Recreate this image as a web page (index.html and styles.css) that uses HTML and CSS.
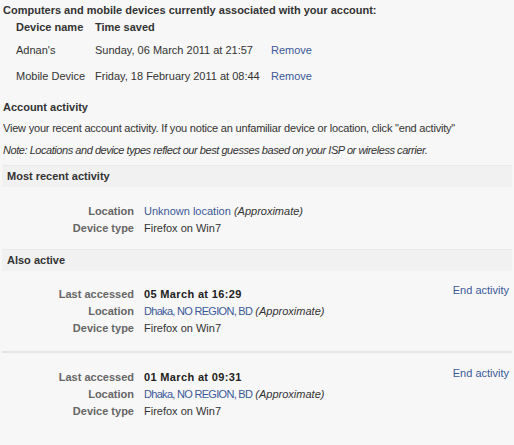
FILE: index.html
```html
<!DOCTYPE html>
<html>
<head>
<meta charset="utf-8">
<link rel="stylesheet" href="styles.css">
</head>
<body>
<div class="page">
  <h2 class="title">Computers and mobile devices currently associated with your account:</h2>
  <div class="devices">
    <div class="dev-head">Device name</div><div class="dev-head">Time saved</div><div></div>
    <div class="dev-cell">Adnan's</div><div class="dev-cell">Sunday, 06 March 2011 at 21:57</div><div class="dev-cell"><a class="link" href="#">Remove</a></div>
    <div class="dev-cell">Mobile Device</div><div class="dev-cell">Friday, 18 February 2011 at 08:44</div><div class="dev-cell"><a class="link" href="#">Remove</a></div>
  </div>

  <h2 class="section-title">Account activity</h2>
  <p class="intro">View your recent account activity. If you notice an unfamiliar device or location, click "end activity"</p>
  <p class="note">Note: Locations and device types reflect our best guesses based on your ISP or wireless carrier.</p>

  <div class="bar">Most recent activity</div>
  <div class="entry recent">
    <div class="info">
      <div class="label">Location</div><div class="value"><a class="link" href="#">Unknown location</a> <i>(Approximate)</i></div>
      <div class="label">Device type</div><div class="value">Firefox on Win7</div>
    </div>
  </div>

  <div class="bar">Also active</div>
  <div class="entry">
    <div class="info">
      <div class="label">Last accessed</div><div class="value strong">05 March at 16:29</div>
      <div class="label">Location</div><div class="value"><a class="link loc" href="#">Dhaka, NO REGION, BD</a> <i>(Approximate)</i></div>
      <div class="label">Device type</div><div class="value">Firefox on Win7</div>
    </div>
    <a class="link end" href="#">End activity</a>
  </div>
  <div class="entry sep">
    <div class="info">
      <div class="label">Last accessed</div><div class="value strong">01 March at 09:31</div>
      <div class="label">Location</div><div class="value"><a class="link loc" href="#">Dhaka, NO REGION, BD</a> <i>(Approximate)</i></div>
      <div class="label">Device type</div><div class="value">Firefox on Win7</div>
    </div>
    <a class="link end" href="#">End activity</a>
  </div>
</div>
</body>
</html>
```
FILE: styles.css
```css
html, body {
  margin: 0;
  padding: 0;
  background: #f7f7f7;
}
body {
  font-family: "Liberation Sans", Arial, sans-serif;
  font-size: 11px;
  color: #333;
}
.page {
  padding: 3px 2px 0 3px;
}
.title {
  margin: 0;
  font-size: 11px;
  font-weight: bold;
  line-height: 14px;
}
.devices {
  display: grid;
  grid-template-columns: 79px 176px auto;
  padding-left: 13px;
  margin-top: 3px;
}
.dev-head {
  font-weight: bold;
  line-height: 14px;
  height: 14px;
}
.dev-cell {
  line-height: 14px;
  padding: 9px 0 3px;
}
.link {
  color: #3b5998;
  text-decoration: none;
}
.section-title {
  margin: 14px 0 0;
  font-size: 11px;
  font-weight: bold;
  line-height: 14px;
}
.intro {
  margin: 7px 0 0;
  line-height: 14px;
  letter-spacing: -0.2px;
}
.note {
  margin: 8px 0 0;
  line-height: 14px;
  font-style: italic;
  letter-spacing: -0.45px;
}
.bar {
  margin-top: 8px;
  margin-left: -1px;
  background: #f1f1f1;
  border-top: 1px solid #e9e9e9;
  font-weight: bold;
  padding: 0 5px;
  line-height: 21px;
  height: 21px;
}
.entry {
  display: flex;
  justify-content: space-between;
  padding: 15px 3px 14px 0;
}
.entry.recent {
  padding: 16px 3px 4px 0;
}
.entry.sep {
  border-top: 2px solid #e6e6e6;
  margin-left: -1px;
  padding-left: 1px;
  padding-top: 16px;
}
.info {
  display: grid;
  grid-template-columns: 131px auto;
  column-gap: 10px;
  line-height: 17px;
  align-content: start;
}
.label {
  text-align: right;
  font-weight: bold;
  color: #666;
}
.value.strong {
  font-weight: bold;
  color: #222;
  letter-spacing: 0.35px;
}
.loc {
  letter-spacing: -0.7px;
}
.value i {
  color: #333;
}
.end {
  line-height: 14px;
  margin-top: -3px;
  align-self: flex-start;
}
```
